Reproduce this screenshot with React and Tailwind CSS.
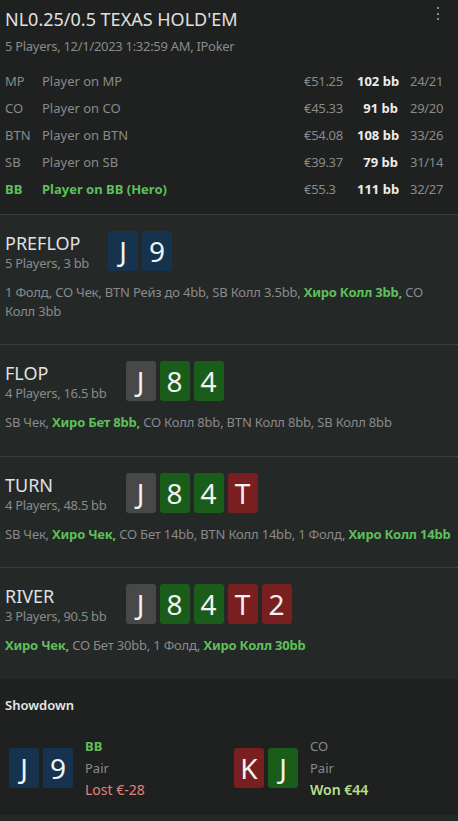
const players = [
  { pos: 'MP', name: 'Player on MP', eur: '€51.25', bb: '102 bb', stats: '24/21' },
  { pos: 'CO', name: 'Player on CO', eur: '€45.33', bb: '91 bb', stats: '29/20' },
  { pos: 'BTN', name: 'Player on BTN', eur: '€54.08', bb: '108 bb', stats: '33/26' },
  { pos: 'SB', name: 'Player on SB', eur: '€39.37', bb: '79 bb', stats: '31/14' },
  { pos: 'BB', name: 'Player on BB (Hero)', eur: '€55.3', bb: '111 bb', stats: '32/27', hero: true },
];

const cardColors = {
  blue: 'bg-[#15334f]',
  gray: 'bg-[#484848]',
  green: 'bg-[#1a5c1a]',
  red: 'bg-[#7a1f1f]',
};

const streets = [
  {
    title: 'PREFLOP',
    info: '5 Players, 3 bb',
    cards: [['J', 'blue'], ['9', 'blue']],
    actions: [
      ['1 Фолд, CO Чек, BTN Рейз до 4bb, SB Колл 3.5bb, '],
      ['Хиро Колл 3bb,', true],
      [' CO Колл 3bb'],
    ],
  },
  {
    title: 'FLOP',
    info: '4 Players, 16.5 bb',
    cards: [['J', 'gray'], ['8', 'green'], ['4', 'green']],
    actions: [
      ['SB Чек, '],
      ['Хиро Бет 8bb,', true],
      [' CO Колл 8bb, BTN Колл 8bb, SB Колл 8bb'],
    ],
  },
  {
    title: 'TURN',
    info: '4 Players, 48.5 bb',
    cards: [['J', 'gray'], ['8', 'green'], ['4', 'green'], ['T', 'red']],
    actions: [
      ['SB Чек, '],
      ['Хиро Чек,', true],
      [' CO Бет 14bb, BTN Колл 14bb, 1 Фолд, '],
      ['Хиро Колл 14bb', true],
    ],
  },
  {
    title: 'RIVER',
    info: '3 Players, 90.5 bb',
    cards: [['J', 'gray'], ['8', 'green'], ['4', 'green'], ['T', 'red'], ['2', 'red']],
    actions: [
      ['Хиро Чек,', true],
      [' CO Бет 30bb, 1 Фолд, '],
      ['Хиро Колл 30bb', true],
    ],
  },
];

function Card({ rank, color }) {
  return (
    <div
      className={`w-[30px] h-[40px] rounded-[3px] flex items-center justify-center text-[28px] leading-none text-[#f2f2f2] ${cardColors[color]}`}
    >
      {rank}
    </div>
  );
}

function Street({ street }) {
  return (
    <div className="border-t border-[#3a3e3d] bg-[#242827] px-[5px] pt-[16px] pb-[24px]">
      <div className="flex items-center gap-[19px]">
        <div className="flex flex-col">
          <div className="text-[18px] leading-[24px] text-[#e0e0e0]">{street.title}</div>
          <div className="text-[13px] leading-[16px] tracking-[-0.3px] text-[#8a8a8a]">{street.info}</div>
        </div>
        <div className="flex gap-[4px]">
          {street.cards.map(([r, c], i) => (
            <Card key={i} rank={r} color={c} />
          ))}
        </div>
      </div>
      <p className="mt-[12px] text-[13px] leading-[18.5px] tracking-[-0.2px] text-[#8a8a8a]">
        {street.actions.map(([t, hero], i) =>
          hero ? (
            <span key={i} className="font-bold text-[#5fbf5a]">{t}</span>
          ) : (
            <span key={i}>{t}</span>
          )
        )}
      </p>
    </div>
  );
}

function ShowdownPlayer({ cards, pos, hand, result, hero, won }) {
  return (
    <div className="flex items-center gap-[12px]">
      <div className="flex gap-[4px]">
        {cards.map(([r, c], i) => (
          <Card key={i} rank={r} color={c} />
        ))}
      </div>
      <div className="flex flex-col">
        <div className={`text-[13px] leading-[22px] ${hero ? 'font-bold text-[#5fbf5a]' : 'text-[#8a8a8a]'}`}>{pos}</div>
        <div className="text-[13px] leading-[22px] text-[#8a8a8a]">{hand}</div>
        <div className={`text-[14px] leading-[22px] ${won ? 'font-semibold text-[#b8e08c]' : 'text-[#e0837a]'}`}>{result}</div>
      </div>
    </div>
  );
}

export default function App() {
  return (
    <div
      className="w-[458px] h-[821px] overflow-hidden bg-[#242827] text-[#8a8a8a]"
      style={{ fontFamily: '"Noto Sans", "Open Sans", sans-serif' }}
    >
      <div className="relative bg-[#1e211f] px-[5px] pt-[8px] pb-[11px]">
        <div className="text-[18px] leading-[22px] text-[#e0e0e0]">NL0.25/0.5 TEXAS HOLD'EM</div>
        <div className="mt-[7px] text-[13px] leading-[18px] tracking-[-0.3px] text-[#8a8a8a]">
          5 Players, 12/1/2023 1:32:59 AM, IPoker
        </div>
        <div className="absolute right-[19px] top-[7px] flex flex-col gap-[3.5px]">
          <span className="w-[2px] h-[2px] bg-[#8a8a8a]" />
          <span className="w-[2px] h-[2px] bg-[#8a8a8a]" />
          <span className="w-[2px] h-[2px] bg-[#8a8a8a]" />
        </div>
        <div className="mt-[13px] flex flex-col">
          {players.map((p) => (
            <div key={p.pos} className="flex items-center h-[27px] text-[13px] whitespace-nowrap">
              <div className={`w-[37px] ${p.hero ? 'font-bold text-[#5fbf5a]' : ''}`}>{p.pos}</div>
              <div className={`flex-1 ${p.hero ? 'font-bold text-[#5fbf5a]' : ''}`}>{p.name}</div>
              <div className="w-[53px] tracking-[-0.3px]">{p.eur}</div>
              <div className="w-[41px] text-right font-bold text-[#ececec]">{p.bb}</div>
              <div className="w-[43px] ml-[12px] tracking-[-0.3px]">{p.stats}</div>
            </div>
          ))}
        </div>
      </div>
      {streets.map((s) => (
        <Street key={s.title} street={s} />
      ))}
      <div className="bg-[#1e211f] pl-[9px] pr-[5px] pt-[17px] pb-[14px]">
        <div className="-ml-[4px] text-[13px] leading-[18px] font-semibold text-[#e6e6e6]">Showdown</div>
        <div className="mt-[21px] grid grid-cols-2">
          <ShowdownPlayer cards={[['J', 'blue'], ['9', 'blue']]} pos="BB" hand="Pair" result="Lost €-28" hero />
          <div className="pl-[3px]">
            <ShowdownPlayer cards={[['K', 'red'], ['J', 'green']]} pos="CO" hand="Pair" result="Won €44" won />
          </div>
        </div>
      </div>
    </div>
  );
}
